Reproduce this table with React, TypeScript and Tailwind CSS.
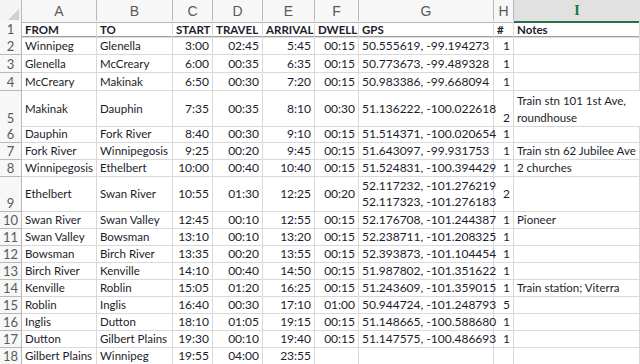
const cols = "grid grid-cols-[22px_75px_76px_40px_50px_52px_44px_135px_20px_126px]";

type Row = {
  cells: string[];
  h: string;
  tall?: boolean;
};

const rows: Row[] = [
  { cells: ["Winnipeg", "Glenella", "3:00", "02:45", "5:45", "00:15", "50.555619, -99.194273", "1", ""], h: "h-[18px]" },
  { cells: ["Glenella", "McCreary", "6:00", "00:35", "6:35", "00:15", "50.773673, -99.489328", "1", ""], h: "h-[18px]" },
  { cells: ["McCreary", "Makinak", "6:50", "00:30", "7:20", "00:15", "50.983386, -99.668094", "1", ""], h: "h-[18px]" },
  { cells: ["Makinak", "Dauphin", "7:35", "00:35", "8:10", "00:30", "51.136222, -100.022618", "2", "Train stn 101 1st Ave, roundhouse"], h: "h-[35px]", tall: true },
  { cells: ["Dauphin", "Fork River", "8:40", "00:30", "9:10", "00:15", "51.514371, -100.020654", "1", ""], h: "h-[17px]" },
  { cells: ["Fork River", "Winnipegosis", "9:25", "00:20", "9:45", "00:15", "51.643097, -99.931753", "1", "Train stn 62 Jubilee Ave"], h: "h-[17px]" },
  { cells: ["Winnipegosis", "Ethelbert", "10:00", "00:40", "10:40", "00:15", "51.524831, -100.394429", "1", "2 churches"], h: "h-[17px]" },
  { cells: ["Ethelbert", "Swan River", "10:55", "01:30", "12:25", "00:20", "52.117232, -101.276219\n52.117323, -101.276183", "2", ""], h: "h-[35px]", tall: true },
  { cells: ["Swan River", "Swan Valley", "12:45", "00:10", "12:55", "00:15", "52.176708, -101.244387", "1", "Pioneer"], h: "h-[17px]" },
  { cells: ["Swan Valley", "Bowsman", "13:10", "00:10", "13:20", "00:15", "52.238711, -101.208325", "1", ""], h: "h-[17px]" },
  { cells: ["Bowsman", "Birch River", "13:35", "00:20", "13:55", "00:15", "52.393873, -101.104454", "1", ""], h: "h-[17px]" },
  { cells: ["Birch River", "Kenville", "14:10", "00:40", "14:50", "00:15", "51.987802, -101.351622", "1", ""], h: "h-[17px]" },
  { cells: ["Kenville", "Roblin", "15:05", "01:20", "16:25", "00:15", "51.243609, -101.359015", "1", "Train station; Viterra"], h: "h-[17px]" },
  { cells: ["Roblin", "Inglis", "16:40", "00:30", "17:10", "01:00", "50.944724, -101.248793", "5", ""], h: "h-[17px]" },
  { cells: ["Inglis", "Dutton", "18:10", "01:05", "19:15", "00:15", "51.148665, -100.588680", "1", ""], h: "h-[17px]" },
  { cells: ["Dutton", "Gilbert Plains", "19:30", "00:10", "19:40", "00:15", "51.147575, -100.486693", "1", ""], h: "h-[17px]" },
  { cells: ["Gilbert Plains", "Winnipeg", "19:55", "04:00", "23:55", "", "", "", ""], h: "h-[17px]" },
];

// A, B, G, I left; C..F and H right
const alignRight = [false, false, true, true, true, true, false, true, false];
const numeric = [false, false, true, true, true, true, true, true, false];
const letters = ["A", "B", "C", "D", "E", "F", "G", "H"];
const headers = ["FROM", "TO", "START", "TRAVEL", "ARRIVAL", "DWELL", "GPS", "#", "Notes"];

function Cell({ text, right, num, bottom }: { text: string; right: boolean; num: boolean; bottom?: boolean }) {
  return (
    <div
      className={`border-r border-b border-[#d9d9d9] px-[3px] flex overflow-visible whitespace-pre leading-[16px] ${
        right ? "justify-end text-right" : "justify-start"
      } ${bottom ? "items-end" : "items-center"} ${num ? "text-[12px]" : ""}`}
    >
      {text}
    </div>
  );
}

export default function App() {
  return (
    <div className="w-[640px] h-[364px] overflow-hidden bg-white text-[11.5px] text-[#1c1c2a] font-['Lato','Open_Sans',sans-serif]">
      {/* Column letters */}
      <div className={`${cols} h-[20px] text-[14px] text-[#5a5a5a] font-['Liberation_Sans',sans-serif]`}>
        <div className="relative border-r border-b border-[#b8b8b8] bg-[#f4f4f4]">
          <div className="absolute right-[2px] bottom-[2px] w-0 h-0 border-l-[11px] border-l-transparent border-b-[11px] border-b-[#d0d0d0]" />
        </div>
        {letters.map((l) => (
          <div key={l} className="flex items-center justify-center border-r border-b border-[#b8b8b8] bg-[#f7f7f7]">
            {l}
          </div>
        ))}
        <div className="flex items-center justify-center border-b-2 border-[#217346] bg-[#e1e1e1] text-[#217346] font-['Liberation_Serif',serif] font-bold">
          I
        </div>
      </div>

      {/* Header row (frozen) */}
      <div className={`${cols} h-[17px] border-b border-[#9c9c9c] shadow-[0_1px_1px_rgba(0,0,0,0.12)] relative`}>
        <div className="flex items-center justify-center border-r border-[#b8b8b8] bg-[#f7f7f7] text-[#5a5a5a] text-[13px]">1</div>
        {headers.map((h) => (
          <div key={h} className="flex items-center px-[3px] border-r border-[#d9d9d9] font-bold whitespace-nowrap">
            {h}
          </div>
        ))}
      </div>

      {rows.map((r, i) => (
        <div key={i} className={`${cols} ${r.h}`}>
          <div
            className={`flex justify-center border-r border-b border-[#b8b8b8] bg-[#f7f7f7] text-[#5a5a5a] text-[13px] leading-[16px] ${
              r.tall ? "items-end" : "items-center"
            }`}
          >
            {i + 2}
          </div>
          {r.cells.map((c, j) =>
            j === 8 && r.tall && c ? (
              <div key={j} className="border-b border-[#d9d9d9] px-[3px] pt-[1px] leading-[17px] whitespace-normal">
                {c}
              </div>
            ) : (
              <Cell key={j} text={c} right={alignRight[j]} num={numeric[j]} bottom={j === 7 && i === 3} />
            )
          )}
        </div>
      ))}
    </div>
  );
}
